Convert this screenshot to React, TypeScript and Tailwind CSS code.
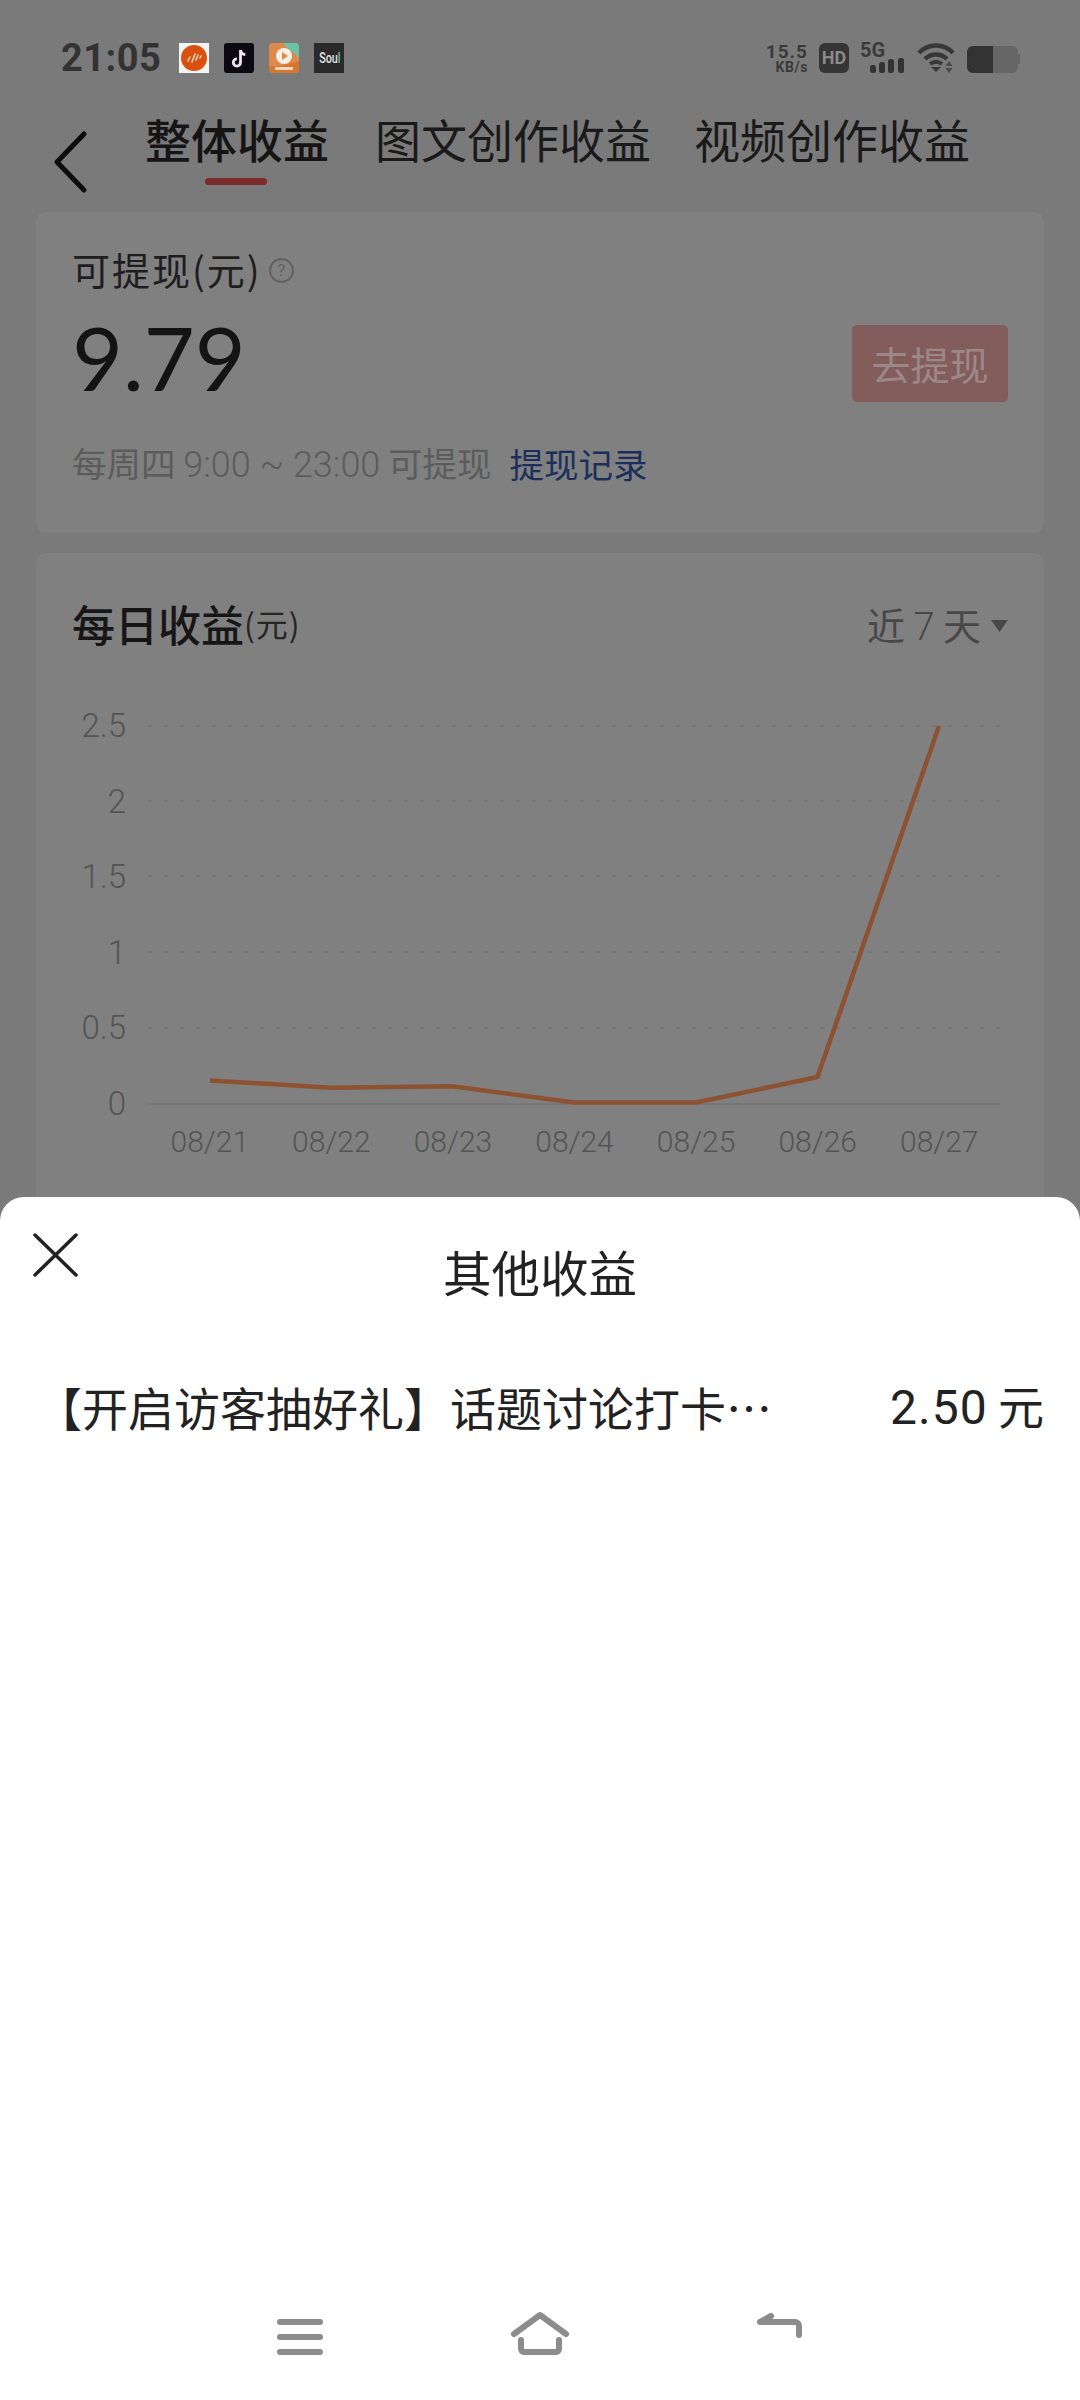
const CJK = "font-['Noto_Sans_CJK_SC','Roboto',sans-serif]";

const yLabels = ["2.5", "2", "1.5", "1", "0.5", "0"];
const xLabels = ["08/21", "08/22", "08/23", "08/24", "08/25", "08/26", "08/27"];
const gridLines = [38, 113, 188, 264, 340];

function AppIcons() {
    return (
        <div className="flex gap-[15px] ml-[18px]">
            <svg width="30" height="30" viewBox="0 0 30 30">
                <rect width="30" height="30" fill="#f4f4f4" />
                <circle cx="15" cy="15" r="13" fill="#d9500f" />
                <path d="M9 18l2-4M13 19l3-8M17 17l2-5M21 15l1-2" stroke="#f3d2b8" strokeWidth="1.6" strokeLinecap="round" />
            </svg>
            <svg width="30" height="30" viewBox="0 0 30 30">
                <rect width="30" height="30" rx="3" fill="#0b0a12" />
                <path d="M16.5 7v12.5a3.6 3.6 0 1 1-3.6-3.6M16.5 7c.4 2.8 2.2 4.4 4.8 4.7" fill="none" stroke="#efe6ee" strokeWidth="2.8" />
            </svg>
            <svg width="30" height="30" viewBox="0 0 30 30">
                <rect width="30" height="30" rx="4" fill="#df8a4a" />
                <path d="M14 0h12a4 4 0 0 1 4 4v11c-5-6-11-8-16-15z" fill="#6cc2a5" />
                <path d="M0 23c10 1 20-2 30-5v8a4 4 0 0 1-4 4H4a4 4 0 0 1-4-4z" fill="#d8752f" />
                <circle cx="15" cy="13" r="8" fill="#f5eee4" />
                <path d="M13 9l6 4-6 4z" fill="#dd8a44" />
                <rect x="6" y="24" width="18" height="3" fill="#f0d9bf" />
            </svg>
            <div className="w-[30px] h-[30px] bg-[#2a2a2a] flex items-center justify-center">
                <span className="font-['Roboto',sans-serif] text-[15px] leading-none font-medium text-[#e4e4e4] scale-x-[0.72]">
                    Sou<span className="text-[#5fc7b5]">l</span>
                </span>
            </div>
        </div>
    );
}

function StatusIcons() {
    return (
        <div className="flex items-start">
            <div className="w-[42px] flex flex-col items-end font-['Roboto',sans-serif] font-bold text-[#3a3a3a]">
                <span className="text-[19px] leading-[18px] tracking-[1px]">15.5</span>
                <span className="text-[14px] leading-[12px] tracking-[0.6px]">KB/s</span>
            </div>
            <div className="ml-[11px] w-[30px] h-[30px] rounded-[6px] bg-[#353535] flex items-center justify-center font-['Roboto',sans-serif] font-bold text-[18px] leading-none text-[#8a8a8a]">
                HD
            </div>
            <div className="ml-[11px] w-[46px] flex flex-col">
                <span className="font-['Roboto',sans-serif] font-bold text-[20px] leading-[15px] text-[#3a3a3a]">5G</span>
                <svg width="46" height="15" viewBox="0 0 46 15">
                    <rect x="10" y="7" width="6" height="8" rx="2.5" fill="#333" />
                    <rect x="19" y="4" width="6" height="11" rx="2.5" fill="#333" />
                    <rect x="28" y="1" width="6" height="14" rx="2.5" fill="#333" />
                    <rect x="38" y="0" width="6" height="15" rx="2.5" fill="#333" />
                </svg>
            </div>
            <svg className="ml-[11px]" width="40" height="30" viewBox="0 0 40 30">
                <path d="M2 10C11 0 27 0 36 10" fill="none" stroke="#383838" strokeWidth="4.5" />
                <path d="M8 16c6-6 16-6 22 0" fill="none" stroke="#383838" strokeWidth="4.5" />
                <path d="M13 21c4-3 8-3 12 0" fill="none" stroke="#383838" strokeWidth="4" />
                <path d="M14 24h10l-5 5z" fill="#383838" />
                <path d="M32 18l3.500 5h-7zM28.500 25h7L32 30z" fill="#4a4a4a" />
            </svg>
            <div className="ml-[10px] mt-[3px] w-[51px] h-[27px] rounded-[6px] bg-[#666666] overflow-hidden">
                <div className="w-[26px] h-full bg-[#333333]" />
            </div>
            <div className="mt-[11px] w-[2px] h-[10px] bg-[#666666]" />
        </div>
    );
}

function Chart() {
    return (
        <div className="flex items-start mt-[41px]">
            <div className="w-[54px] flex flex-col font-['Roboto',sans-serif] font-light text-[33px] text-[#545454] text-right">
                {yLabels.map((label) => (
                    <div key={label} className="h-[75.6px] leading-[75.6px]">{label}</div>
                ))}
            </div>
            <div className="ml-[22px] w-[852px]">
                <svg width="852" height="423" viewBox="0 0 852 423" className="block">
                    {gridLines.map((y) => (
                        <line key={y} x1="0" x2="852" y1={y} y2={y} stroke="#767676" strokeWidth="2" strokeDasharray="4 12" />
                    ))}
                    <line x1="0" x2="852" y1="416" y2="416" stroke="#787878" strokeWidth="2" />
                    <polyline
                        points="62,392.500 183,399.700 304,398.300 426,414.500 548,414.500 669.500,389 791,38"
                        fill="none"
                        stroke="#8c5232"
                        strokeWidth="4.5"
                        strokeLinejoin="round"
                    />
                </svg>
                <div className="flex mt-[11px] pl-[1px] font-['Roboto',sans-serif] font-light text-[30px] leading-[40px] text-[#545454]">
                    {xLabels.map((label) => (
                        <div key={label} className="w-[121.6px] text-center">{label}</div>
                    ))}
                </div>
            </div>
        </div>
    );
}

export default function App() {
    return (
        <div lang="zh-CN" className={`w-[1080px] h-[2400px] flex flex-col bg-[#7a7a7a] ${CJK}`}>
            <div className="h-[1197px] shrink-0 overflow-hidden">
                <div className="flex justify-between items-start pt-[43px] pl-[61px] pr-[60px] h-[73px]">
                    <div className="flex items-center">
                        <span className="font-['Roboto',sans-serif] font-bold text-[38px] leading-[30px] text-[#333333] tracking-[0.5px]">21:05</span>
                        <AppIcons />
                    </div>
                    <StatusIcons />
                </div>

                <div className="flex items-start h-[139px]">
                    <svg className="ml-[50px] mt-[56px]" width="40" height="66" viewBox="0 0 40 66">
                        <path d="M34 5L7 33l27 28" fill="none" stroke="#0c0c0c" strokeWidth="5" strokeLinecap="round" strokeLinejoin="round" />
                    </svg>
                    <div className="ml-[55px] flex flex-col items-center mt-[36px]">
                        <span className="text-[46px] leading-[58px] font-medium text-[#151515]">整体收益</span>
                        <div className="mt-[11px] -ml-[3px] w-[62px] h-[7px] rounded-full bg-[#7c2a2a]" />
                    </div>
                    <span className="ml-[46px] mt-[36px] text-[46px] leading-[58px] text-[#1a1a1a]">图文创作收益</span>
                    <span className="ml-[43px] mt-[36px] text-[46px] leading-[58px] text-[#1a1a1a]">视频创作收益</span>
                </div>

                <div className="mx-[36px] h-[321px] rounded-[10px] bg-[#808080] px-[36px] pt-[36px]">
                    <div className="flex items-center h-[44px]">
                        <span className="text-[38px] leading-[44px] text-[#1e1e1e] tracking-[2px] -mt-[3px]">可提现(元)</span>
                        <div className="ml-[7px] w-[25px] h-[25px] rounded-full border-2 border-[#626262] flex items-center justify-center font-['Roboto',sans-serif] text-[17px] leading-none text-[#626262]">?</div>
                    </div>
                    <div className="flex justify-between items-center h-[110px] mt-[10px]">
                        <span className="font-['Lato',sans-serif] text-[88px] leading-[110px] text-[#141414]">9.79</span>
                        <div className="mt-[13px] w-[156px] h-[77px] rounded-[5px] bg-[#835c5c] flex items-center justify-center text-[39px] text-[#9c8888]">去提现</div>
                    </div>
                    <div className="flex items-center h-[44px] mt-[29px] text-[34.5px] leading-[44px]">
                        <span className="text-[#5c5c5c]">每周四 <span className="font-['Roboto',sans-serif] font-light text-[36px]">9:00 ~ 23:00</span> 可提现</span>
                        <span className="ml-[18px] text-[#1c2f5c]">提现记录</span>
                    </div>
                </div>

                <div className="mx-[36px] mt-[20px] h-[700px] rounded-[10px] bg-[#808080] px-[36px] pt-[46px]">
                    <div className="flex justify-between items-center h-[48px]">
                        <div className="flex items-center">
                            <span className="text-[43px] leading-[48px] font-medium text-[#161616]">每日收益</span>
                            <span className="text-[32px] leading-[48px] text-[#262626] tracking-[1px]">(元)</span>
                        </div>
                        <div className="flex items-center text-[#484848] mt-[4px]">
                            <span className="text-[38px] leading-[48px]">近 <span className="font-['Roboto',sans-serif] font-light">7</span> 天</span>
                            <svg className="ml-[10px]" width="17" height="13" viewBox="0 0 17 13">
                                <path d="M0 1h17l-8.500 12z" fill="#484848" />
                            </svg>
                        </div>
                    </div>
                    <Chart />
                </div>
            </div>

            <div className="flex-1 flex flex-col bg-white rounded-t-[24px]">
                <div className="grid grid-cols-[1fr_auto_1fr] items-start pt-[36px]">
                    <svg className="ml-[32px]" width="48" height="46" viewBox="0 0 48 46">
                        <path d="M3 2l41 40M44 2L3 42" fill="none" stroke="#222222" strokeWidth="3.500" strokeLinecap="round" />
                    </svg>
                    <span className="mt-[8px] text-[48.500px] leading-[60px] text-[#222222]">其他收益</span>
                </div>
                <div className="flex justify-between items-center mt-[75px] h-[60px] pl-[36px] pr-[36px] text-[46px] leading-[60px] text-[#222222]">
                    <span className="whitespace-nowrap">【开启访客抽好礼】话题讨论打卡…</span>
                    <span className="whitespace-nowrap"><span className="font-['Roboto',sans-serif] text-[48px] tracking-[1px]">2.50</span> 元</span>
                </div>

                <div className="mt-auto flex pl-[270px] pb-[40px] gap-[180px]">
                    <svg width="60" height="50" viewBox="0 0 60 50">
                        <path d="M10 12h40M10 27h40M10 42h40" fill="none" stroke="#8c8c8c" strokeWidth="6" strokeLinecap="round" />
                    </svg>
                    <svg width="60" height="50" viewBox="0 0 60 50">
                        <path d="M4 24L30 5l26 19" fill="none" stroke="#8c8c8c" strokeWidth="6" strokeLinecap="round" strokeLinejoin="round" />
                        <path d="M11 30v9a3 3 0 0 0 3 3h32a3 3 0 0 0 3-3v-9" fill="none" stroke="#8c8c8c" strokeWidth="6" strokeLinecap="round" strokeLinejoin="round" />
                    </svg>
                    <svg width="60" height="50" viewBox="0 0 60 50">
                        <path d="M21 6L10 12h35a4 4 0 0 1 4 4v9" fill="none" stroke="#8c8c8c" strokeWidth="6" strokeLinecap="round" strokeLinejoin="round" />
                    </svg>
                </div>
            </div>
        </div>
    );
}
